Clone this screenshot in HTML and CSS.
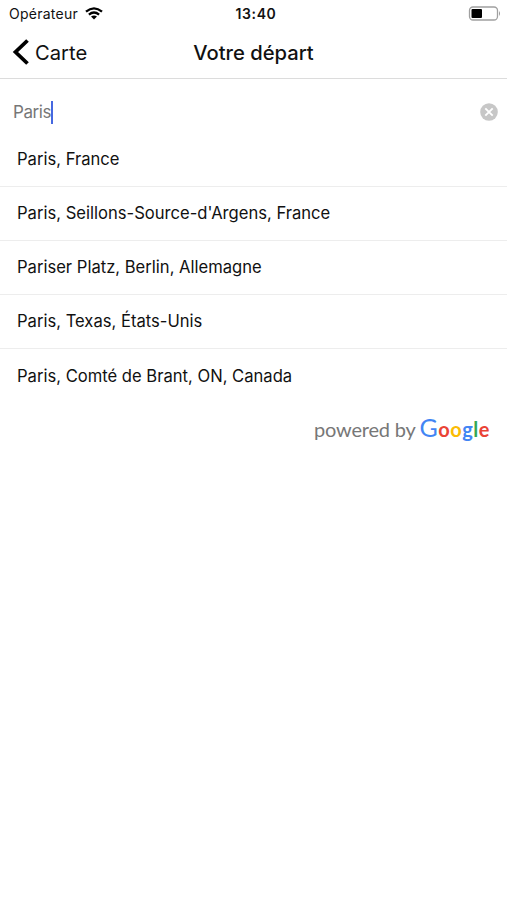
FILE: index.html
```html
<!doctype html>
<html lang="fr">
	<head>
		<meta charset="UTF-8">
		<title>Votre départ</title>
		<link rel="stylesheet" href="styles.css">
	</head>
	<body>
		<div class="status">
			<div class="carrier">
				<span>Opérateur</span>
				<svg class="wifi" width="18" height="13" viewBox="0 0 18 13">
					<path d="M1 4.7Q9-2 17 4.7M3.9 7.6Q9 3.4 14.1 7.6" fill="none" stroke="#000" stroke-width="2.3"/>
					<path d="M6 9.6Q9 7.2 12 9.6L9 12.6z"/>
				</svg>
			</div>
			<span class="time">13:40</span>
			<svg class="battery" width="33" height="15" viewBox="0 0 33 15">
				<rect x="1.5" y="1" width="28" height="13" rx="3.5" fill="#fff" stroke="#a0a0a0" stroke-width="1.3"/>
				<path d="M31 5q2 2.5 0 5z" fill="#999"/>
				<rect x="3.5" y="3" width="10.5" height="9" rx="1"/>
			</svg>
		</div>
		<header class="navbar">
			<a class="back" href="#">
				<svg width="18" height="26" viewBox="0 0 18 26">
					<path d="M15.5 1.5L3.5 13L15.5 24.5" fill="none" stroke="#000" stroke-width="3.8"/>
				</svg>
				<span class="back-label">Carte</span>
			</a>
			<h1>Votre départ</h1>
		</header>
		<div class="search">
			<span class="query">Paris</span><span class="caret"></span>
			<svg class="clear" width="18" height="18" viewBox="0 0 18 18">
				<circle cx="9" cy="9" r="8.8" fill="#c7c7c7"/>
				<path d="M5.3 5.3L12.7 12.7M12.7 5.3L5.3 12.7" stroke="#fff" stroke-width="1.9"/>
			</svg>
		</div>
		<ul class="results">
			<li><span>Paris, France</span></li>
			<li><span>Paris, Seillons-Source-d'Argens, France</span></li>
			<li><span>Pariser Platz, Berlin, Allemagne</span></li>
			<li><span>Paris, Texas, États-Unis</span></li>
			<li><span>Paris, Comté de Brant, ON, Canada</span></li>
		</ul>
		<div class="powered">
			<span class="by">powered by</span>
			<span class="google"><span class="blue cap">G</span><span class="red">o</span><span class="yellow">o</span><span class="blue">g</span><span class="green">l</span><span class="red">e</span></span>
		</div>
	</body>
</html>
```

FILE: styles.css
```css
* {
	box-sizing: border-box;
}
body {
	margin: 0;
	background-color: #fff;
	color: #111;
	font-family: Inter, "Liberation Sans", sans-serif;
}
.status {
	display: grid;
	grid-template-columns: 1fr auto 1fr;
	align-items: center;
	height: 27px;
	padding: 0 6px 0 9px;
}
.carrier {
	display: flex;
	align-items: center;
	gap: 7px;
	font-size: 14px;
	letter-spacing: 0.25px;
}
.time {
	padding-left: 2px;
	font-size: 14px;
	font-weight: 600;
	letter-spacing: 0.6px;
}
.battery {
	justify-self: end;
}
.navbar {
	display: grid;
	grid-template-columns: 1fr auto 1fr;
	align-items: center;
	height: 52px;
	padding: 0 12px 1px 12px;
	border-bottom: 1px solid #dcdcdc;
}
.back {
	display: flex;
	align-items: center;
	gap: 5px;
	color: #111;
	font-size: 20.2px;
	text-decoration: none;
}
h1 {
	margin: 0;
	font-size: 20.2px;
	font-weight: 500;
}
.search {
	display: flex;
	align-items: center;
	height: 54px;
	padding: 12px 9px 0 13px;
}
.query {
	color: #777;
	font-size: 17px;
	letter-spacing: -0.4px;
}
.caret {
	width: 2px;
	height: 23px;
	background-color: #4668e0;
}
.clear {
	margin-left: auto;
}
.results {
	margin: 0;
	padding: 0;
	list-style: none;
}
.results li {
	display: flex;
	align-items: center;
	height: 54px;
	padding: 0 0 1px 17px;
	border-bottom: 1px solid #ededed;
	font-size: 16.6px;
}
.results li:last-child {
	border-bottom: 0;
}
.powered {
	display: flex;
	justify-content: flex-end;
	align-items: baseline;
	gap: 4px;
	padding: 10px 17px 0 0;
	font-family: Lato, sans-serif;
	font-size: 20px;
	line-height: 28px;
}
.by {
	color: #777;
	letter-spacing: -0.2px;
}
.google {
	font-weight: 700;
	letter-spacing: 0.5px;
}
.cap {
	font-size: 25px;
	font-weight: 400;
}
.blue {
	color: #4285f4;
}
.red {
	color: #ea4335;
}
.yellow {
	color: #fbbc05;
}
.green {
	color: #34a853;
}
```
